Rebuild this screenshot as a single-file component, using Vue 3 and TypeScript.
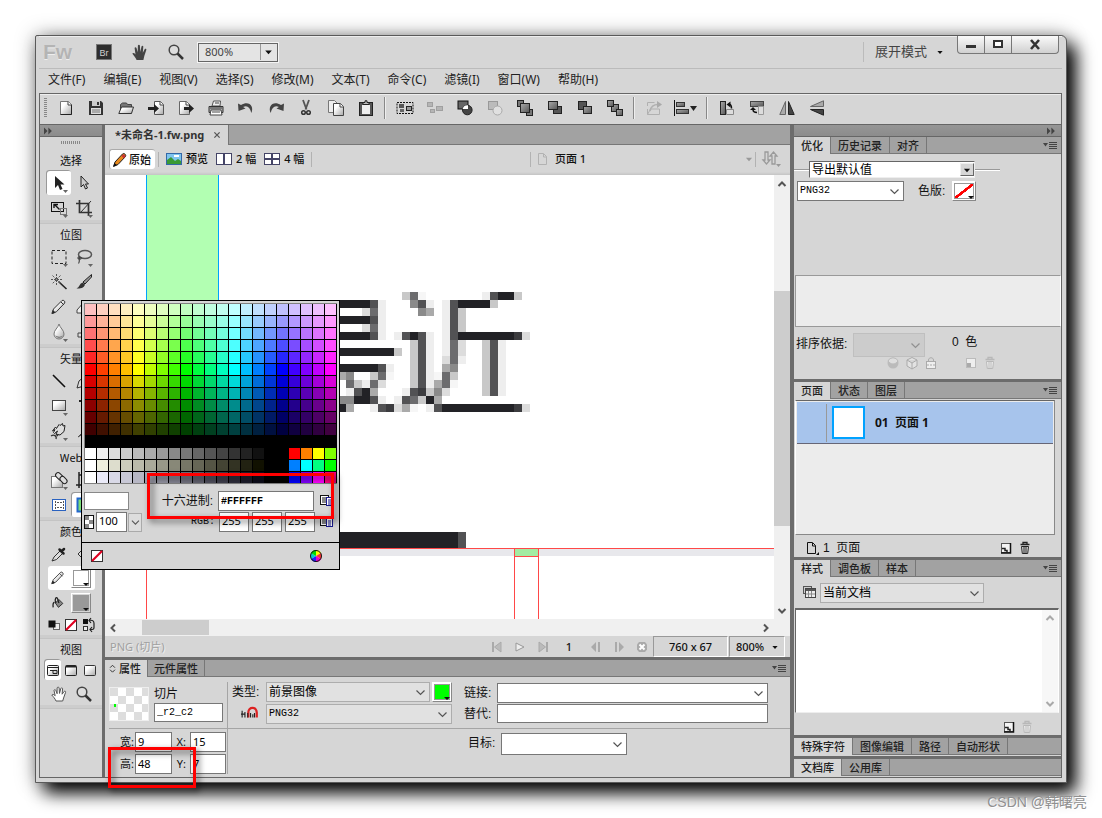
<script setup lang="ts">
import { h, ref } from 'vue'

const icons: Record<string, string> = {
  bridge: '<rect x=".5" y=".5" width="15" height="15" fill="#2e2e2e" stroke="#777"/><text x="8" y="11.5" font-size="9" font-family="Liberation Sans, sans-serif" text-anchor="middle" fill="#d0d0d0">Br</text>',
  hand: '<path d="M4.6 16C3.500 13.500 2 12 .3 9.600c.8-1 2-.7 3.200.8L2.600 4c.2-1.100 1.500-1.100 1.900 0l1.200 4.200L5.900 1.600c.3-1.200 1.700-1.200 2 0l.4 6.400 1.200-5.600c.5-1 1.700-.8 1.800.2l-.5 6.200 2-3.700c.8-.8 1.800-.2 1.500.8L12.300 12l-.9 4z" fill="#444"/>',
  zoom: '<circle cx="6" cy="6" r="4.800" fill="#ddd" stroke="#444" stroke-width="1.500"/><path d="M9.500 9.500l5.500 5.500" stroke="#333" stroke-width="2.500"/>',
  file: '<path d="M2.500 1.500h8l3 3v10h-11z" fill="url(#gl)" stroke="#777"/><path d="M13.500 4.500v10h-11" fill="none" stroke="#222"/><path d="M10 1.500v3.500h3.500" fill="#fff" stroke="#444"/>',
  save: '<path d="M1 1h12l2 2v12H1z" fill="#333"/><rect x="4" y="1" width="8" height="5" fill="#ccc"/><rect x="9" y="2" width="2" height="3" fill="#333"/><rect x="3" y="8" width="10" height="6" fill="#ddd"/><path d="M4 10h8M4 12h8" stroke="#777"/>',
  open: '<path d="M2.500 13V4.500l2-1.500h4l1 1.500h4V13z" fill="#777" stroke="#444"/><path d="M.8 13.500L3.500 7h12l-2 6.500z" fill="url(#gl)" stroke="#333"/>',
  import: '<path d="M6.500 1.500h6l3 3v10h-9z" fill="url(#gl)" stroke="#555"/><path d="M12 1.500v3.500h3.500" fill="#fff" stroke="#444"/><path d="M0 7h6V4l5 4.500L6 13v-3H0z" fill="#222"/>',
  export: '<path d="M1.500 1.500h7l3 3v10h-10z" fill="url(#gl)" stroke="#666"/><path d="M8 1.500v3.500h3.500" fill="#fff" stroke="#444"/><path d="M6 7h5V4l5 4.500-5 4.500v-3H6z" fill="#222"/>',
  print: '<path d="M4 6L5.500 1h7L12 6z" fill="#eee" stroke="#555"/><path d="M1 6.500h14v6H1z" fill="#aaa" stroke="#333"/><path d="M3 10h10l1 5H2z" fill="#fff" stroke="#444"/><path d="M4 12h8M2 8h12M7 3h4" stroke="#444"/>',
  undo: '<path d="M0 3.500l.5 7.500 7-2.500-2.400-1.500C9 5 12 7 13.300 13 16.500 6.500 11 0 3 5z" fill="#444"/>',
  redo: '<path d="M16 3.500l-.5 7.500-7-2.500 2.400-1.500C7 5 4 7 2.700 13-.5 6.500 5 0 13 5z" fill="#444"/>',
  cut: '<path d="M5 0l3.500 9.500M11 0L7.500 9.500" stroke="#555" stroke-width="1.800"/><circle cx="5.500" cy="12.500" r="1.800" fill="none" stroke="#333" stroke-width="1.500"/><circle cx="10.500" cy="12.500" r="1.800" fill="none" stroke="#333" stroke-width="1.500"/>',
  copy: '<path d="M.5.5h6l3 3v9h-9z" fill="#eee" stroke="#777"/><path d="M5.500 3.500h7l3 3v9h-10z" fill="url(#gl)" stroke="#444"/><path d="M12 3.500V7h3.500" fill="#fff" stroke="#444"/>',
  paste: '<rect x="1.500" y="2.500" width="13" height="13" fill="#555" stroke="#222"/><rect x="4" y="5" width="8" height="9" fill="#eee"/><path d="M5 4.500V2.500h2V.8h2v1.700h2v2z" fill="#bbb" stroke="#222"/>',
  group: '<rect x="0" y="2.500" width="16" height="11" fill="none" stroke="#111" stroke-dasharray="2 1"/><rect x="2" y="4" width="5" height="4" fill="#555"/><rect x="3" y="9" width="4" height="3" fill="#666"/><rect x="9.500" y="6.500" width="5" height="4" fill="#999" stroke="#222"/>',
  ungroup: '<g fill="#b5b5b5" stroke="#a0a0a0"><rect x=".5" y="2.500" width="5" height="4"/><rect x="3.500" y="9.500" width="4" height="3"/><rect x="9.500" y="6.500" width="6" height="4"/></g>',
  union: '<rect x="1" y="1" width="10" height="8" fill="#666" stroke="#111"/><circle cx="10.300" cy="10" r="4.800" fill="#444" stroke="#222"/><path d="M11 5.200V9H5.600A5 5 0 0 1 11 5.200z" fill="#fff"/>',
  split: '<rect x="1.500" y="1.500" width="9" height="8" fill="#bbb" stroke="#999"/><circle cx="10.500" cy="10.500" r="4.500" fill="#e0e0e0" stroke="#aaa"/>',
  front: '<g fill="#777" stroke="#222"><rect x=".5" y=".5" width="6" height="6"/><rect x="9.500" y="9.500" width="6" height="6"/><rect x="3.500" y="3.500" width="9" height="9" fill="url(#gd)"/></g>',
  forward: '<rect x="6.500" y="6.500" width="8" height="7" fill="#555" stroke="#222"/><rect x="1.500" y="1.500" width="9" height="8" fill="url(#gd)" stroke="#222"/>',
  backward: '<rect x="1.500" y="1.500" width="8" height="8" fill="#555" stroke="#222"/><rect x="6.500" y="6.500" width="8" height="7" fill="url(#gd)" stroke="#222"/>',
  back: '<g fill="url(#gd)" stroke="#222"><rect x="4.500" y="4.500" width="7" height="7"/><rect x=".5" y=".5" width="6" height="6"/><rect x="9.500" y="9.500" width="6" height="6"/></g>',
  convert: '<g fill="none" stroke="#b0b0b0"><path d="M1.500 6V2.500h7M1.500 14.500h12V9h-9zM1.500 9v5.500" /><path d="M4 11c1-5 4-6.500 8-6.500" stroke-width="1.500"/></g><path d="M11 1l5 3.500L11 8z" fill="#aaa"/>',
  align: '<path d="M-3.500 0v16" stroke="#111"/><rect x="-1.500" y="2.500" width="8" height="4" fill="url(#gd)" stroke="#333"/><rect x="-1.500" y="9.500" width="12" height="4" fill="url(#gd)" stroke="#333"/><path d="M12 6h7l-3.500 5z" fill="#222"/>',
  rotr: '<rect x="1.500" y="1.500" width="5" height="13" fill="url(#gd)" stroke="#222"/><path d="M7.500 9.500h7v5h-7z" fill="#ddd" stroke="#888"/><path d="M12.500 8.500c0-3-1-4-2-4" fill="none" stroke="#111" stroke-width="1.500"/><path d="M7.500 4.500l4-3v6z" fill="#111"/>',
  rotl: '<rect x="1.500" y="1.500" width="13" height="5" fill="url(#gd)" stroke="#444"/><path d="M9.500 6.500h5v8h-5z" fill="#ddd" stroke="#999"/><path d="M8 12.500c-3 0-4-1-4-3" fill="none" stroke="#111" stroke-width="1.500"/><path d="M1 10l3-3 3 3z" fill="#111"/>',
  fliph: '<path d="M6.500 1.500v13H.8z" fill="#aaa" stroke="#666"/><path d="M9.500 1.500v13h5.700z" fill="#444" stroke="#222"/>',
  flipv: '<path d="M14.500.8v5.700H1.500z" fill="#aaa" stroke="#666"/><path d="M14.500 15.200V9.500H1.500z" fill="#444" stroke="#222"/>',
  arrow: '<path d="M4 1v12l3-3 2 5 2.500-1-2-4.500h4z" fill="#222"/>',
  subarrow: '<path d="M5 1v11l2.500-2.500 2 4.500 2-1-2-4h3z" fill="#ccc" stroke="#222"/>',
  scale: '<rect x=".5" y="2.500" width="12" height="9" fill="none" stroke="#111"/><rect x="9.500" y="8.500" width="6" height="6" fill="none" stroke="#777"/><path d="M3.500 4.500l5 5M3 8V4.500h4" fill="none" stroke="#111" stroke-width="1.400"/>',
  crop: '<path d="M3.500 0v12.500H16M0 3.500h12.500V16" fill="none" stroke="#333" stroke-width="1.700"/><path d="M5 12L15 1" stroke="#333"/>',
  marquee: '<rect x="1" y="1.500" width="14" height="13" fill="none" stroke="#222" stroke-dasharray="3 2"/>',
  lasso: '<ellipse cx="9" cy="5.500" rx="6.500" ry="4" fill="none" stroke="#555" stroke-width="1.500"/><path d="M3.500 7.500c-3 1-1 3.500 1 2.500s-.5-2.500-1-1c-.6 2 .5 3.500-1 5.500" fill="none" stroke="#444" stroke-width="1.200"/>',
  wand: '<path d="M7.500 7.500l8 7.500" stroke="#222" stroke-width="1.600"/><path d="M5.500 0v11M0 5.500h11M1.500 1.500l8 8M9.500 1.500l-8 8" stroke="#555" stroke-dasharray="2 1"/>',
  brush: '<path d="M15.500.5L7 8l2 2 6.500-7z" fill="#999" stroke="#222"/><path d="M6.500 8.500l2.500 2c-1 4-5 4-8.500 4C4 13 3 10 6.500 8.500z" fill="#333"/>',
  pencil: '<path d="M1 14.500l1.500-4.500L11 1.500c1.500-1 3.500 1 2.700 2.500L5.500 12.700z" fill="url(#gl)" stroke="#333"/><path d="M1 14.500l1-3 2 2zM10 3l3 3" fill="#111" stroke="#333"/>',
  eraser: '<path d="M1 11l7-8h6l-6 8v3H1z" fill="#eee" stroke="#444"/>',
  blur: '<path d="M8 0c1 4 5 6 5 10a5 5 0 0 1-10 0C3 6 7 4 8 0z" fill="url(#gl)" stroke="#777"/><path d="M4 11.500a4.500 4.500 0 0 0 8 0c-2 1.500-5 1.500-8 0z" fill="#777"/>',
  stamp: '<path d="M2 13V9h4V3h5v6h3v4z" fill="#ddd" stroke="#444"/>',
  line: '<path d="M2 2l12 12" stroke="#111" stroke-width="1.600"/>',
  pen: '<path d="M1 15L3 8l6-5 4 4-5 6z" fill="#ddd" stroke="#333"/>',
  rect: '<rect x="1.500" y="2.500" width="13" height="10" fill="url(#gl)" stroke="#444"/>',
  type: '<path d="M3 3h10M8 3v11" stroke="#222" stroke-width="2"/>',
  freeform: '<path d="M1.500 8l3-4 1 1.500L8 1.500l1 1 2.500-2 .5 2.500 2-.5-1 6-4 3.500-4-1 1.500-3-3 2.500-1-1 1.500-3-1.500 1z" fill="#ddd" stroke="#222"/><path d="M0 13c3-2 6 0 5 3M5 11l2 2" fill="none" stroke="#333" stroke-width="1.300"/>',
  knife: '<path d="M2 14L14 2v5z" fill="#bbb" stroke="#555"/>',
  hotspot: '<rect x=".5" y="4.500" width="11" height="11" fill="url(#gl)" stroke="#777"/><g fill="#ddd" stroke="#222"><rect x="6" y="0" width="5" height="9" rx="2.500" transform="rotate(-45 8.500 4.500)"/><rect x="10" y="4" width="5" height="8" rx="2.500" transform="rotate(-45 12.500 8)"/></g>',
  slice: '<path d="M3 0v16M0 13h16M3 3h10v10" stroke="#222" fill="none" stroke-width="1.500"/>',
  hideslice: '<rect x="1.500" y="2.500" width="13" height="11" fill="#fff" stroke="#2a62c0"/><path d="M4.500 4v8M12.500 4v8M6 5.500h6M6 10.500h6" stroke="#555" stroke-dasharray="2 1"/>',
  showslice: '<rect x="1.500" y="1.500" width="13" height="13" fill="#7d7" stroke="#26c" stroke-width="2"/><path d="M6 1v14" stroke="#d22"/>',
  dropper: '<path d="M1 15l2-4 6-6 2.500 2.500-6 6z" fill="#ddd" stroke="#333"/><path d="M8.500 3.500l4 4M10.500 5.500L13 3" fill="none" stroke="#222" stroke-width="2.500" stroke-linecap="round"/>',
  bucket: '<path d="M2 8l6-6 6 6-6 6z" fill="#ddd" stroke="#333"/>',
  fill: '<path d="M5 8l4-4 4.500 4.500-5 4.500z" fill="#888" stroke="#222"/><path d="M5.500 8c-2-5 1-8 2-5l1.500 5M4 7c-2 1-2 3-1.500 6" fill="none" stroke="#222" stroke-width="1.500"/>',
  defcolors: '<rect x="7.500" y="6.500" width="6" height="6" fill="#eee" stroke="#666"/><rect x="2.500" y="3.500" width="7" height="7" fill="#111"/>',
  none: '<rect x="2.500" y="2.500" width="11" height="11" fill="#fff" stroke="#333"/><path d="M3 13L13 3" stroke="#e00020" stroke-width="2.200"/>',
  swap: '<rect x="2" y="2" width="5" height="5" fill="#111"/><rect x="2.500" y="9.500" width="4" height="4" fill="#eee" stroke="#333"/><path d="M8 3.500c4-1 5 1 5 3v4c0 2-1 2-4 2M10 1L8 3.500 10 6M11 10l-2 2.500 2 2.500" fill="none" stroke="#222" stroke-width="1.200"/>',
  view1: '<rect x="2.500" y="3.500" width="11" height="10" rx="1" fill="url(#gl)" stroke="#222"/><path d="M3 5.500h10M5 8.500h3v3h4v-3H8" fill="none" stroke="#222"/>',
  view2: '<rect x="2.500" y="3.500" width="11" height="10" rx="1" fill="url(#gl)" stroke="#222"/><path d="M3 4.500h10" stroke="#222" stroke-width="2"/>',
  view3: '<rect x="2.500" y="3.500" width="11" height="10" rx="1" fill="url(#gl)" stroke="#333"/>',
  pan: '<path d="M5 15C4 12.500 2.500 11 .8 9c.8-1 2-.7 3.400.8L3 4.500c.2-1.100 1.500-1.100 1.900 0l1.200 3.200L6.100 2c.3-1.200 1.700-1.200 2 0l.4 5.400L9.800 2.500c.5-1 1.700-.8 1.800.2l-.5 5.500 2-2.700c.8-.8 1.800-.2 1.500.8L12.600 12l-.9 3z" fill="#fff" stroke="#555"/>',
  crayon: '<path d="M1.500 14.500L3 10l7.500-8c1.500-1.500 4 .8 3 2.500L6 12.500z" fill="#e8891c" stroke="#222"/><path d="M9.500 4l2.500 2.500 1.200-1.700c.8-1.300-1.300-3-2.500-2z" fill="#c33"/><path d="M1.500 14.500l1-3.500 2.500 2z" fill="#111"/>',
  preview: '<rect x=".5" y="2.500" width="15" height="11" fill="#7ec4ee" stroke="#3468a8"/><path d="M1 13V9l4-3 4 4 3-2 3 2v3z" fill="#3a9a35"/><path d="M8 5h5" stroke="#fff" stroke-width="2"/>',
  two: '<rect x=".5" y="2.500" width="15" height="11" fill="#fff" stroke="#446"/><path d="M8 3v11" stroke="#446" stroke-width="2"/>',
  four: '<rect x=".5" y="2.500" width="15" height="11" fill="#fff" stroke="#446"/><path d="M8 3v11M1 8h14" stroke="#446" stroke-width="2"/>',
  page: '<path d="M3.500 2.500h5l3 3v8h-8zM8.500 3v3h3" fill="none" stroke="#b2b2b2"/>',
  transfer: '<g fill="none" stroke="#9a9a9a" stroke-width="1.300"><path d="M3 1h3v8h2l-3.500 4L1 9h2zM10 13h3V5h2l-3.500-4L8 5h2z"/></g><path d="M14 13h5l-2.500 3z" fill="#999"/>',
  first: '<path d="M4 3v10" stroke="#aaa" stroke-width="2"/><path d="M12 3v10L5.500 8z" fill="#bbb" stroke="#aaa"/>',
  play: '<path d="M4 4l8 4-8 4z" fill="#eee" stroke="#999"/>',
  last: '<path d="M12 3v10" stroke="#aaa" stroke-width="2"/><path d="M4 3v10l6.500-5z" fill="#bbb" stroke="#aaa"/>',
  prev: '<path d="M8 3v10L3 8zM10 3h2v10h-2z" fill="#aaa"/>',
  next: '<path d="M8 3v10l5-5zM4 3h2v10H4z" fill="#aaa"/>',
  stop: '<path d="M5 3h6l2 2.500v5L11 13H5l-2-2.500v-5z" fill="#aaa"/><path d="M5.500 5.500l5 5M10.500 5.500l-5 5" stroke="#fff" stroke-width="2"/>',
  sphere: '<circle cx="8" cy="8" r="5.500" fill="#bbb"/><path d="M3 6a5.500 5.500 0 0 1 10 0C10 10 6 10 3 6z" fill="#dedede" stroke="#bbb"/>',
  cube: '<path d="M8 2.500l5 2.500v6l-5 3-5-3V5zM3 5l5 3 5-3M8 8v6" fill="#e2e2e2" stroke="#aaa"/>',
  lock: '<path d="M5.500 7V5c0-3 5-3 5 0v2" fill="none" stroke="#aaa"/><rect x="3.500" y="6.500" width="9" height="7" fill="#eee" stroke="#aaa"/><path d="M4 10h8" stroke="#aaa" stroke-dasharray="2 1"/>',
  newd: '<rect x="3.500" y="3.500" width="9" height="9" fill="#eee" stroke="#bbb"/><path d="M4 8h4v4H4z" fill="#aaa"/>',
  new: '<rect x="3.500" y="3.500" width="9" height="9" fill="#f4f4f4" stroke="#555"/><path d="M12.500 3v10H3" fill="none" stroke="#111" stroke-width="1.500"/><path d="M4 8.500h3v2h2v2" fill="none" stroke="#222" stroke-width="1.500"/>',
  bin: '<path d="M3.500 4.500h9M6 4V2.500h4V4" fill="none" stroke="#222" stroke-width="1.300"/><path d="M4.500 6.500h7l-.8 7H5.300zM7 7v6M9 7v6" fill="#ddd" stroke="#222"/>',
  bind: '<path d="M3.500 4.500h9M6 4V2.500h4V4" fill="none" stroke="#b8b8b8" stroke-width="1.300"/><path d="M4.500 6.500h7l-.8 7H5.300zM7 7v6M9 7v6" fill="#eee" stroke="#b8b8b8"/>',
  pagecount: '<path d="M3.500 2.500h5l3 3v8h-8zM8.500 3v3h3" fill="none" stroke="#111"/><path d="M15 12v3h-3z" fill="#111"/>',
  styles: '<rect x="1.500" y="1.500" width="8" height="7" fill="#ccc" stroke="#555"/><rect x="3.500" y="3.500" width="10" height="9" fill="#eee" stroke="#444"/><path d="M4 5h9" stroke="#555" stroke-width="2"/><path d="M6.500 6v6M9.500 6v6M4 9h9" stroke="#888"/>',
  bend: '<path d="M6.500 12V7.500C6.500 2 14 2 14 7.500V12" fill="none" stroke="#d22" stroke-width="2"/><path d="M1 6v6M0 9h3M3.500 7v5M6 8v4M8.500 8v4M10.500 9v3M12 8v4" stroke="#222"/>',
  swatches: '<rect x="2.500" y="2.500" width="8" height="9" fill="#fff" stroke="#111"/><path d="M4 5h5M4 7h4M4 9h4" stroke="#111"/><rect x="8.500" y="4.500" width="6" height="8" fill="#fff" stroke="#1a1a90"/><path d="M10 7h3M10 9h3M10 11h3" stroke="#1a1a90"/>',
  checker: '<rect x="3.500" y="1.500" width="9" height="13" fill="#fff" stroke="#111"/><path d="M4 2h4v4H4zM8 6h4v4H8zM4 10h4v4H4z" fill="#888"/>',
  wheel: '<path d="M8 8V2a6 6 0 0 1 5.200 3z" fill="#ff0"/><path d="M8 8l5.200-3v6z" fill="#f33"/><path d="M8 8l5.200 3A6 6 0 0 1 8 14z" fill="#e0c"/><path d="M8 8v6a6 6 0 0 1-5.200-3z" fill="#22f"/><path d="M8 8l-5.200 3V5z" fill="#0cc"/><path d="M8 8L2.800 5A6 6 0 0 1 8 2z" fill="#0d0"/><circle cx="8" cy="8" r="5.500" fill="none" stroke="#111"/>',
  chev: '<path d="M4.500 6.500l4 4 4-4" fill="none" stroke="#555" stroke-width="1.200"/>',
  tri: '<path d="M4.500 6.500h7L8 10.500z" fill="#111"/>',
  up: '<path d="M4.500 10L8 6.500l3.500 3.500" fill="none" stroke="#555" stroke-width="2"/>',
  down: '<path d="M4.500 6L8 9.500 11.500 6" fill="none" stroke="#555" stroke-width="2"/>',
  left: '<path d="M10 4.500L6.500 8l3.500 3.500" fill="none" stroke="#555" stroke-width="2"/>',
  right: '<path d="M6 4.500L9.500 8 6 11.500" fill="none" stroke="#555" stroke-width="2"/>',
  menu: '<path d="M1 6h5L3.500 9.500z" fill="#444"/><path d="M7 5.500h8M7 7.500h8M7 9.500h8M7 11.500h8" stroke="#444"/>',
  ff: '<path d="M0 4v8l4-4zM5 4v8l4-4z" fill="#444"/>',
  min: '<rect x="3" y="8" width="10" height="3" fill="#333"/>',
  max: '<rect x="4" y="4" width="8" height="6" fill="#fff" stroke="#333" stroke-width="2"/>',
  close: '<path d="M4 3l8 9M12 3l-8 9" stroke="#333" stroke-width="2.600"/>',
  tabx: '<path d="M5 5l6 6M11 5l-6 6" stroke="#555" stroke-width="1.500"/>',
  updown: '<path d="M5 7l3-3 3 3M5 9.500l3 3 3-3" fill="none" stroke="#333" stroke-width="1.200"/>',
}

const Ic = (p: { n: string; s?: number; m?: boolean }) =>
  h('svg', {
    viewBox: '0 0 16 16',
    width: p.s ?? 16,
    height: p.s ?? 16,
    class: 'ic',
    'aria-hidden': 'true',
    innerHTML: icons[p.n] + (p.m ? '<path d="M12 15h5l-2.500 3z" fill="#666"/>' : ''),
  })
Ic.props = { n: String, s: Number, m: Boolean }

const menus = ['文件(F)', '编辑(E)', '视图(V)', '选择(S)', '修改(M)', '文本(T)', '命令(C)', '滤镜(I)', '窗口(W)', '帮助(H)']

const bar = [
  ['file', 'save', 'open', 'import', 'export', 'print', 'undo', 'redo', 'cut', 'copy', 'paste'],
  ['group', 'ungroup', 'union', 'split', 'front', 'forward', 'backward', 'back'],
  ['convert', 'align'],
  ['rotr', 'rotl', 'fliph', 'flipv'],
]

type Tool = { n: string; m?: boolean; on?: boolean }
const toolSections: { title: string; tools: Tool[] }[] = [
  { title: '选择', tools: [{ n: 'arrow', m: true, on: true }, { n: 'subarrow' }, { n: 'scale', m: true }, { n: 'crop', m: true }] },
  {
    title: '位图',
    tools: [{ n: 'marquee', m: true }, { n: 'lasso', m: true }, { n: 'wand' }, { n: 'brush' }, { n: 'pencil' }, { n: 'eraser' }, { n: 'blur', m: true }, { n: 'stamp' }],
  },
  { title: '矢量', tools: [{ n: 'line' }, { n: 'pen' }, { n: 'rect', m: true }, { n: 'type' }, { n: 'freeform', m: true }, { n: 'knife' }] },
  { title: 'Web', tools: [{ n: 'hotspot', m: true }, { n: 'slice' }, { n: 'hideslice' }, { n: 'showslice', on: true }] },
]

// Pixels of the open bitmap at 800 %: one digit per pixel, 0 is paper, A is full ink.
const shades: Record<string, string> = {
  '1': '#f6f6f6', '2': '#eeeeee', '3': '#dcdcdc', '4': '#c8c8c8', '5': '#aaaaaa',
  '6': '#8a8a8a', '7': '#6c6c6e', '8': '#525254', '9': '#3c3c3f', A: '#222226',
}
const bitmap = [
  '00000000471000000028AA40',
  'AAAA82000682028AAAA40000',
  '000372000065028400000000',
  'AAAA82000000028400000000',
  '000372000000028400000000',
  'AAAA82028A82028AAAAAAA93',
  '000000000482027300482000',
  'AAAAAAA40482027300482000',
  '000000000482037200482000',
  'AAAAA8200482056000482000',
  '560047100482174000482000',
  '074273000482571000482000',
  '028A50002894630000482000',
  '66AA8202874A500000000000',
  'A500289351028AAAAAAAAA93',
]
const pixels = bitmap.flatMap((row, y) =>
  [...row].map((c, x) => ({ x: 233 + x * 8, y: 117 + y * 8, c: shades[c] })).filter((p) => p.c),
)

const hex = (r: number, g: number, b: number) => `rgb(${Math.round(r)},${Math.round(g)},${Math.round(b)})`
const hues: number[][] = Array.from({ length: 21 }, (_, i) => {
  const seg = Math.floor(i / 4)
  const f = (i % 4) / 4
  return [[1, f, 0], [1 - f, 1, 0], [0, 1, f], [0, 1 - f, 1], [f, 0, 1], [1, 0, 1]][seg]
})
const ranges = [[192, 255], [153, 255], [115, 255], [77, 255], [38, 255], [0, 255], [0, 217], [0, 179], [0, 140], [0, 102], [0, 64]]
const tail = [
  ['#f00', '#ff8000', '#ff0', '#80ff00'],
  ['#0080ff', '#0ff', '#00ff80', '#0f0'],
  ['#00f', '#8000ff', '#f0f', '#ff0080'],
]
const swatches = [
  ...ranges.flatMap(([lo, hi]) => hues.map(([r, g, b]) => hex(lo + (hi - lo) * r, lo + (hi - lo) * g, lo + (hi - lo) * b))),
  ...Array.from({ length: 21 }, () => '#000'),
  ...tail.flatMap((t, k) => [
    ...Array.from({ length: 17 }, (_, i) => {
      const v = Math.max(0, 255 - 17 * i)
      if (i === 0) return '#fff'
      if (v === 0) return '#000'
      return k === 0 ? hex(v, v, v) : k === 1 ? hex(v, v, v - 16) : hex(v - 4, v - 4, v + 10)
    }),
    ...t,
  ]),
]

const hexValue = ref('#FFFFFF')
const alpha = ref('100')
const rgb = ref(['255', '255', '255'])
const sliceName = ref('_r2_c2')
const box = ref({ w: '9', h: '48', x: '15', y: '7' })
</script>

<template>
  <div class="page">
    <svg class="defs" width="0" height="0" aria-hidden="true">
      <defs>
        <linearGradient id="gl" x1="0" y1="0" x2="1" y2="1"><stop offset=".3" stop-color="#fff" /><stop offset="1" stop-color="#a8a8a8" /></linearGradient>
        <linearGradient id="gd" x1="0" y1="0" x2="1" y2="1"><stop offset="0" stop-color="#aaa" /><stop offset="1" stop-color="#555" /></linearGradient>
      </defs>
    </svg>
    <div class="window">
      <header class="title">
        <span class="logo">Fw</span>
        <button class="tb" aria-label="Bridge"><Ic n="bridge" /></button>
        <button class="tb" aria-label="手形"><Ic n="hand" /></button>
        <button class="tb" aria-label="缩放"><Ic n="zoom" /></button>
        <span class="sel zoomsel"><select aria-label="缩放比例"><option>800%</option></select><Ic n="tri" /></span>
        <span class="grow"></span>
        <button class="mode">展开模式<Ic n="tri" :s="12" /></button>
        <div class="winbtns">
          <button aria-label="最小化"><Ic n="min" /></button>
          <button aria-label="最大化"><Ic n="max" /></button>
          <button class="x" aria-label="关闭"><Ic n="close" /></button>
        </div>
      </header>
      <nav class="menu"><button v-for="m in menus" :key="m">{{ m }}</button></nav>

      <div class="frame">
        <div class="toolbar">
          <span class="grip"></span>
          <template v-for="(g, i) in bar" :key="i">
            <span v-if="i" class="sep"></span>
            <button v-for="n in g" :key="n" :class="{ wide: n === 'align' }" :aria-label="n"><Ic :n="n" /></button>
          </template>
        </div>

        <div class="body">
          <aside class="tools">
            <div class="collapse left"><Ic n="ff" :s="14" /></div>
            <div class="hgrip"></div>
            <section v-for="s in toolSections" :key="s.title">
              <h2>{{ s.title }}</h2>
              <div class="pair"><button v-for="t in s.tools" :key="t.n" :class="{ on: t.on }" :aria-label="t.n"><Ic :n="t.n" :m="t.m" /></button></div>
            </section>
            <section class="colors">
              <h2>颜色</h2>
              <div class="pair"><button aria-label="滴管"><Ic n="dropper" /></button><button aria-label="油漆桶"><Ic n="bucket" /></button></div>
              <div class="colrow on"><Ic n="pencil" :s="14" /><button class="well" aria-label="笔触颜色"><i></i></button></div>
              <div class="colrow"><Ic n="fill" :s="14" /><button class="well grey" aria-label="填充颜色"><i></i></button></div>
              <div class="trio"><button aria-label="默认颜色"><Ic n="defcolors" /></button><button aria-label="无"><Ic n="none" /></button><button aria-label="交换颜色"><Ic n="swap" /></button></div>
            </section>
            <section class="views">
              <h2>视图</h2>
              <div class="trio"><button class="on" aria-label="标准屏幕"><Ic n="view1" /></button><button aria-label="带菜单全屏"><Ic n="view2" /></button><button aria-label="全屏"><Ic n="view3" /></button></div>
              <div class="pair"><button aria-label="平移"><Ic n="pan" /></button><button aria-label="放大镜"><Ic n="zoom" /></button></div>
            </section>
          </aside>

          <main class="center">
            <div class="doctabs"><button class="doctab">*未命名-1.fw.png <Ic n="tabx" :s="14" /></button></div>
            <div class="docbar">
              <button class="on"><Ic n="crayon" />原始</button>
              <span class="sep"></span>
              <button><Ic n="preview" />预览</button>
              <button><Ic n="two" />2 幅</button>
              <button><Ic n="four" />4 幅</button>
              <span class="sep"></span>
              <span class="grow"></span>
              <span class="sep"></span>
              <button class="pagebtn"><Ic n="page" />页面 1</button>
              <span class="dim"><Ic n="tri" :s="14" /></span>
              <span class="sep"></span>
              <button class="transfer" aria-label="传输文件"><Ic n="transfer" /></button>
            </div>
            <div class="canvaswrap">
              <svg class="canvas" role="img" aria-label="最近" shape-rendering="crispEdges">
                <rect x="41" y="0" width="73" height="373" fill="#b2ffb2" />
                <path d="M41.500 0v373M113.500 0v373" stroke="#00a2ff" />
                <rect v-for="(p, i) in pixels" :key="i" :x="p.x" :y="p.y" width="8" height="8" :fill="p.c" />
                <rect x="41" y="357" width="312" height="16" fill="#222226" />
                <rect x="353" y="357" width="8" height="16" fill="#525254" />
                <rect x="41" y="374" width="100%" height="7" fill="#e8e8ec" />
                <rect x="410" y="374" width="23" height="7" fill="#a2eca2" />
                <path d="M41 373.500H2000M41.500 373v900M409.500 373v900M433.500 373v900M409 381.500h25" fill="none" stroke="#ff4848" />
              </svg>
              <div class="vscroll"><Ic n="up" /><i></i><Ic n="down" /></div>
            </div>
            <div class="hscroll"><Ic n="left" /><i></i><Ic n="right" /></div>
            <div class="status">
              <span class="kind">PNG (切片)</span>
              <button aria-label="第一帧"><Ic n="first" /></button>
              <button aria-label="播放"><Ic n="play" /></button>
              <button aria-label="最后一帧"><Ic n="last" /></button>
              <span class="frameno">1</span>
              <button aria-label="上一帧"><Ic n="prev" /></button>
              <button aria-label="下一帧"><Ic n="next" /></button>
              <button aria-label="停止"><Ic n="stop" /></button>
              <span class="dims">760 x 67</span>
              <button class="pct">800%<Ic n="tri" :s="12" /></button>
            </div>

            <section class="props">
              <div class="tabs"><button class="on first"><Ic n="updown" :s="13" />属性</button><button>元件属性</button><Ic n="menu" class="pm" /></div>
              <div class="ptop">
                <div class="pleft">
                  <div class="thumb"><i></i></div>
                  <div class="pname"><label for="slice">切片</label><input id="slice" v-model="sliceName" class="mono" /></div>
                </div>
                <div class="ptype">
                  <label for="kind">类型:</label>
                  <span class="sel grey"><select id="kind"><option>前景图像</option></select><Ic n="chev" /></span>
                  <button class="well green" aria-label="切片颜色"><i></i></button>
                  <span class="bend"><Ic n="bend" :s="18" /></span>
                  <span class="sel grey fmt"><select class="mono" aria-label="导出格式"><option>PNG32</option></select><Ic n="chev" /></span>
                </div>
                <div class="plink">
                  <label for="link">链接:</label><span class="sel"><select id="link"><option></option></select><Ic n="chev" /></span>
                  <label for="alt">替代:</label><input id="alt" />
                </div>
              </div>
              <div class="pbot">
                <div class="pdims">
                  <label for="bw">宽:</label><input id="bw" v-model="box.w" /><label for="bx">X:</label><input id="bx" v-model="box.x" />
                  <label for="bh">高:</label><input id="bh" v-model="box.h" /><label for="by">Y:</label><input id="by" v-model="box.y" />
                </div>
                <div class="ptarget"><label for="target">目标:</label><span class="sel"><select id="target"><option></option></select><Ic n="chev" /></span></div>
              </div>
            </section>
          </main>

          <aside class="right">
            <div class="collapse"><Ic n="ff" :s="14" /></div>
            <section class="panel opt">
              <div class="tabs"><button class="on">优化</button><button>历史记录</button><button>对齐</button><Ic n="menu" class="pm" /></div>
              <div class="preset"><hr /><span class="sel old"><select aria-label="导出预设"><option>导出默认值</option></select><b><Ic n="tri" :s="14" /></b></span><hr class="r" /></div>
              <div class="optrow"><span class="sel"><select class="mono" aria-label="文件格式"><option>PNG32</option></select><Ic n="chev" /></span><span class="lbl">色版:</span><button class="well nil" aria-label="色版"><i></i></button></div>
              <div class="swatchbox"></div>
              <div class="sort"><label for="sort">排序依据:</label><span class="sel dis"><select id="sort" disabled><option></option></select><Ic n="chev" /></span><span class="count">0&nbsp; 色</span></div>
              <div class="opticons"><Ic n="sphere" /><Ic n="cube" /><Ic n="lock" /><Ic n="newd" class="gap" /><Ic n="bind" /></div>
            </section>
            <section class="panel pages">
              <div class="tabs"><button class="on">页面</button><button>状态</button><button>图层</button><Ic n="menu" class="pm" /></div>
              <ul><li><span class="gut"></span><span class="pthumb"></span>01&nbsp; 页面 1</li></ul>
              <div class="foot"><Ic n="pagecount" />1&nbsp; 页面<span class="grow"></span><button aria-label="新建页面"><Ic n="new" /></button><button aria-label="删除页面"><Ic n="bin" /></button></div>
            </section>
            <section class="panel styles">
              <div class="tabs"><button class="on">样式</button><button>调色板</button><button>样本</button><Ic n="menu" class="pm" /></div>
              <div class="stylerow"><Ic n="styles" /><span class="sel grey"><select aria-label="样式来源"><option>当前文档</option></select><Ic n="chev" /></span></div>
              <div class="stylebox"><div class="vs"><Ic n="up" /><Ic n="down" /></div></div>
              <div class="foot"><span class="grow"></span><button aria-label="新建样式"><Ic n="new" /></button><button aria-label="删除样式"><Ic n="bind" /></button></div>
            </section>
            <section class="panel mini"><div class="tabs"><button class="on">特殊字符</button><button>图像编辑</button><button>路径</button><button>自动形状</button></div></section>
            <section class="panel mini"><div class="tabs"><button class="on">文档库</button><button>公用库</button></div></section>
          </aside>
        </div>
      </div>

      <div class="picker" role="dialog" aria-label="颜色选择器">
        <div class="palette"><button v-for="(c, i) in swatches" :key="i" :style="{ background: c }" :aria-label="c"></button></div>
        <div class="prow">
          <span class="current"></span>
          <label class="hexlabel" for="hex">十六进制:</label>
          <input id="hex" v-model="hexValue" class="mono hex" />
          <button aria-label="复制"><Ic n="swatches" /></button>
        </div>
        <div class="prow second">
          <Ic n="checker" class="chk" />
          <input v-model="alpha" class="alpha" aria-label="透明度" />
          <button class="drop" aria-label="透明度列表"><Ic n="chev" :s="14" /></button>
          <label class="rgblabel" for="r0">RGB:</label>
          <input v-for="(_, i) in rgb" :id="'r' + i" :key="i" v-model="rgb[i]" class="ch" :aria-label="'通道 ' + (i + 1)" />
          <button aria-label="复制 RGB"><Ic n="swatches" /></button>
        </div>
        <div class="pfoot"><button aria-label="透明"><Ic n="none" /></button><button aria-label="色轮"><Ic n="wheel" /></button></div>
      </div>
      <div class="mark hexmark"></div>
      <div class="mark sizemark"></div>
    </div>
    <span class="credit">CSDN @韩曙亮</span>
  </div>
</template>

<style>
body { margin: 0; background: #fff; }
</style>

<style scoped>
* { box-sizing: border-box; }
.page { position: relative; display: flex; min-height: 100vh; padding: 35px; overflow: hidden; font: 12px/16px "Liberation Sans", "Noto Sans CJK SC", sans-serif; color: #111; }
.defs { position: absolute; }
.ic { display: block; flex: none; overflow: visible; }
button { display: flex; align-items: center; justify-content: center; padding: 0; border: 0; background: none; font: inherit; color: inherit; white-space: nowrap; }
input, select { width: 100%; min-width: 0; margin: 0; border: 1px solid #777; border-radius: 0; background: #fff; font: inherit; color: #000; padding: 0 2px; appearance: none; outline: 0; opacity: 1; }
.grow { flex: 1; }
.mono { font-family: "Liberation Mono", monospace; font-size: 10px; }
.sel { display: grid; }
.sel > * { grid-area: 1 / 1; }
.sel > svg { justify-self: end; align-self: center; margin-right: 2px; pointer-events: none; }
.sel.grey select { background: #e1e1e1; border-color: #adadad; }

.window { position: relative; flex: 1; min-width: 0; display: flex; flex-direction: column; border: 1px solid #5a5a5a; border-radius: 2px 6px 0 0; background: #d6d6d6; padding: 0 4px 4px 3px; box-shadow: 9px 10px 18px #000, 0 0 20px rgba(0, 0, 0, .35); }
.title { display: flex; align-items: center; height: 33px; border-bottom: 1px solid #bbb; box-shadow: inset 0 1px #eee; }
.logo { width: 47px; padding-left: 4px; font: bold 21px/24px "Liberation Sans", sans-serif; color: #b4b4b4; text-shadow: 0 1px #eee; }
.tb { width: 36px; height: 24px; }
.zoomsel { width: 80px; height: 19px; margin-left: 4px; outline: 1px solid #f4f4f4; }
.zoomsel select { border-color: #666; background: #e4e4e4; padding-left: 6px; font-family: "Noto Sans", sans-serif; font-size: 11px; color: #444; }
.zoomsel > svg { border-left: 1px solid #999; }
.mode { align-self: center; height: 20px; gap: 7px; margin-right: 11px; padding-left: 11px; border-left: 1px solid #bbb; font-size: 13px; color: #444; }
.winbtns { display: flex; align-self: flex-start; height: 18px; margin-right: 3px; border: 1px solid #777; border-top: 0; border-radius: 0 0 4px 4px; background: linear-gradient(#fafafa, #d0d0d0); }
.winbtns button { width: 27px; border-right: 1px solid #777; }
.winbtns .x { width: 46px; border: 0; }
.menu { display: flex; gap: 18px; height: 24px; padding-left: 9px; color: #222; }
.menu button { height: 21px; font-family: "Noto Sans", "Noto Sans CJK SC", sans-serif; font-size: 12px; }

.frame { flex: 1; display: flex; flex-direction: column; border: 1px solid #666; min-height: 0; }
.toolbar { display: flex; align-items: center; height: 31px; padding-bottom: 2px; border-bottom: 1px solid #666; box-shadow: inset 0 1px #eee; }
.toolbar button { width: 30px; height: 28px; }
.toolbar .wide { width: 34px; }
.toolbar .sep { width: 2px; height: 22px; margin: 0 4px 0 3px; border-left: 1px solid #888; background: #eee; }
.grip { width: 3px; height: 20px; margin: 0 4px; background: repeating-linear-gradient(#888 0 1px, transparent 1px 2px); }
.body { flex: 1; display: flex; min-height: 0; background: #6c6c6c; }

.tools { width: 62px; flex: none; margin-right: 3px; background: #d6d6d6; }
.collapse { display: flex; align-items: center; justify-content: flex-end; height: 12px; padding-right: 2px; background: linear-gradient(#969696, #8c8c8c); border-bottom: 1px solid #666; }
.collapse.left { justify-content: flex-start; padding: 0 0 0 4px; }
.hgrip { height: 3px; width: 19px; margin: 4px 0 6px 21px; background: repeating-linear-gradient(90deg, #888 0 1px, transparent 1px 2px); }
.tools section { padding-bottom: 3px; border-bottom: 1px solid #c4c4c4; box-shadow: inset 0 -3px #cdcdcd; }
.tools h2 { margin: 0; height: 20px; font: 11px/20px "Noto Sans CJK SC", sans-serif; text-align: center; }
.pair { display: grid; grid-template-columns: 25px 25px; padding-left: 6px; }
.pair button { height: 25px; }
.on { background: #fff; border-radius: 3px; }
.pair .on { box-shadow: inset 1px 1px #999; }
.colrow { display: flex; align-items: center; height: 24px; gap: 6px; margin: 0 7px 1px 8px; padding-left: 3px; }
.well { position: relative; width: 20px; height: 20px; padding: 1px; border: 1px solid #aaa; border-color: #fff #888 #888 #fff; background: #fff; }
.well i { width: 100%; height: 100%; border: 1px solid #999; background: #fff; }
.well::after { content: ""; position: absolute; right: 1px; bottom: 1px; border: 3px solid transparent; border-top-color: #111; border-bottom: 0; }
.well.grey { background: #d6d6d6; }
.well.grey i { background: #999; }
.well.green i { background: #0f0; }
.well.nil { width: 24px; }
.well.nil i { background: linear-gradient(to bottom right, #fff 44%, #f00 45% 56%, #fff 57%); }
.trio { display: flex; justify-content: space-between; padding: 0 5px; height: 17px; margin-bottom: 2px; }
.trio button { width: 17px; }
.views .trio { height: 21px; padding: 0 4px; }
.views .pair button { height: 23px; }
.views .trio .on { box-shadow: inset 1px 1px #999; }

.center { flex: 1; min-width: 0; display: flex; flex-direction: column; background: #d6d6d6; margin-right: 4px; }
.doctabs { height: 20px; background: #a2a2a2; border-bottom: 1px solid #777; display: flex; }
.doctab { height: 20px; padding: 0 4px 0 10px; gap: 6px; background: #d6d6d6; border-right: 1px solid #777; font: bold 11px/18px "Noto Sans", "Noto Sans CJK SC", sans-serif; color: #333; }
.docbar { display: flex; align-items: center; height: 30px; padding: 0 4px 2px; font: 500 11px/16px "Noto Sans", "Noto Sans CJK SC", sans-serif; background: linear-gradient(#d6d6d6 90%, #c4c4c4); }
.docbar button { gap: 4px; padding: 0 4px; height: 20px; }
.docbar .on { border: 1px solid #aaa; border-width: 1px 0 0 1px; padding: 0 4px 0 2px; gap: 1px; }
.docbar .sep { width: 1px; height: 15px; margin: 0 3px; background: #b2b2b2; }
.docbar .pagebtn { width: 208px; justify-content: flex-start; padding-left: 1px; }
.docbar .transfer { padding: 0 8px 0 3px; }
.dim { width: 10px; opacity: .3; }
.canvaswrap { flex: 1; min-height: 0; display: flex; background: #fff; }
.canvas { flex: 1; min-width: 0; height: 100%; display: block; }
.vscroll { display: flex; flex-direction: column; width: 16px; background: #f0f0f0; padding: 1px 0 0; }
.vscroll i { flex: 0 0 235px; margin: auto 0 77px; background: #cdcdcd; }
.hscroll { display: flex; align-items: center; height: 17px; background: #f0f0f0; }
.hscroll i { width: 67px; height: 15px; margin: 0 auto 0 21px; background: #cdcdcd; }
.hscroll svg:last-child { margin-right: 16px; }
.status { display: flex; align-items: center; height: 21px; padding-right: 5px; font: 500 11px/16px "Noto Sans", "Noto Sans CJK SC", sans-serif; }
.kind { flex: 1; padding-left: 5px; color: #a0a0a0; text-shadow: 1px 1px #eee; font-weight: 400; }
.status button { width: 23px; }
.frameno { width: 30px; text-align: center; }
.dims { width: 75px; text-align: center; line-height: 19px; border: 1px solid #999; border-color: #999 #fff #fff #999; }
.status .pct { width: 56px; height: 21px; margin-left: 1px; gap: 5px; padding-left: 3px; border: 1px solid #999; border-color: #999 #fff #fff #999; }

.props { height: 120px; border-top: 3px solid #6c6c6c; background: #d6d6d6; }
.tabs { display: flex; align-items: flex-start; height: 17px; background: #a2a2a2; border-bottom: 1px solid #777; }
.tabs button { padding: 0 7px; height: 16px; border-right: 1px solid #777; font: 500 11px/16px "Noto Sans CJK SC", sans-serif; color: #222; }
.tabs .on { height: 17px; padding-bottom: 1px; background: #d6d6d6; border-radius: 0; }
.tabs .first { padding: 0 6px 1px 1px; }
.tabs .first + button { padding: 0 6px; }
.pm { margin: 0 3px 0 auto; }
.ptop { display: flex; height: 52px; margin: 0 0 0 4px; border-bottom: 1px solid #a5a5a5; }
.pleft { flex: none; display: flex; width: 119px; margin-top: 5px; border-right: 1px solid #a5a5a5; }
.thumb { width: 40px; height: 34px; margin: 5px 5px 0 0; padding: 16px 4px; background: repeating-conic-gradient(#fff 0 25%, #ddd 0 50%) 0 0 / 16px 16px; border: 1px solid #eee; }
.thumb i { display: block; width: 2px; height: 3px; background: #0f0; }
.pname { display: flex; flex-direction: column; width: 69px; padding-top: 4px; gap: 1px; }
.pname input { height: 19px; }
.ptype { display: grid; grid-template-columns: 32px 164px 20px; grid-template-rows: 20px 20px; row-gap: 2px; column-gap: 2px; width: 228px; flex: none; padding: 5px 0 0 4px; }
.ptype label { line-height: 20px; }
.fmt { grid-column: 2 / 4; }
.bend { padding-left: 9px; }
.plink { flex: 1; display: grid; grid-template-columns: 33px minmax(0, 271px); grid-template-rows: 20px 19px; row-gap: 1px; padding: 6px 20px 0 8px; }
.plink label { line-height: 20px; }
.pbot { display: flex; height: 45px; padding-left: 4px; }
.pdims { display: grid; grid-template-columns: 26px 37px 18px 36px; grid-template-rows: 20px 20px; row-gap: 2px; width: 119px; flex: none; padding-top: 3px; border-right: 1px solid #a5a5a5; font: 11px/20px "Noto Sans", "Noto Sans CJK SC", sans-serif; }
.pdims label { text-align: right; padding-right: 1px; }
.pdims label:nth-of-type(even) { padding-right: 4px; }
.ptarget { display: grid; grid-template-columns: 33px 126px; height: 20px; margin: 4px 0 0 240px; line-height: 20px; }

.right { width: 267px; flex: none; display: flex; flex-direction: column; gap: 3px; background: #6c6c6c; }
.panel { background: #d6d6d6; }
.right > .collapse { margin-bottom: -3px; padding-right: 0; }
.opt { height: 242px; flex: none; }
.preset { display: flex; align-items: center; padding-top: 7px; }
.preset hr { width: 15px; margin: 0; border: 0; border-top: 1px solid #999; border-bottom: 1px solid #fff; }
.preset .r { width: 25px; }
.old { width: 166px; }
.old select { height: 17px; border: 1px solid #666; border-right-color: #eee; border-bottom-color: #eee; line-height: 14px; }
.old b { justify-self: end; align-self: center; display: flex; align-items: center; width: 14px; height: 13px; margin-right: 1px; background: #d6d6d6; border: 1px solid #777; border-color: #eee #666 #666 #eee; pointer-events: none; }
.old b svg { margin-left: -1px; }
.optrow { display: flex; padding: 3px 0 0 3px; height: 23px; }
.optrow .sel { width: 107px; }
.lbl { margin: 0 6px 0 14px; line-height: 20px; width: 28px; }
.swatchbox { height: 52px; margin: 74px 0 0 1px; background: #ececec; border: 1px solid #999; border-right-color: #fff; }
.sort { display: flex; padding: 6px 0 0 2px; line-height: 22px; }
.sort label { width: 57px; }
.sel.dis { width: 72px; height: 20px; }
.dis select { background: #ccc; border-color: #bfbfbf; }
.dis svg { opacity: .5; }
.count { margin-left: 27px; line-height: 18px; }
.opticons { display: flex; gap: 3px; padding: 0 0 0 91px; }
.opticons .gap { margin-left: 21px; }
.pages { height: 175px; flex: none; }
.pages ul { list-style: none; margin: 1px 6px 0 1px; padding: 1px; height: 135px; background: #ececec; border: 1px solid #888; border-color: #666 #888 #888 #fff; }
.pages li { display: flex; align-items: center; height: 42px; border-bottom: 1px solid #667; background: #a7c4ec; font: bold 12px/16px "Noto Sans", "Noto Sans CJK SC", sans-serif; }
.gut { width: 30px; height: 38px; border-right: 1px solid #999; margin-right: 5px; }
.pthumb { width: 33px; height: 33px; margin-right: 10px; background: #fff; border: 2px solid #00a2ff; }
.foot { display: flex; align-items: center; height: 22px; gap: 3px; padding: 2px 28px 0 10px; }
.pages .foot { padding-top: 4px; }
.styles { flex: 1; display: flex; flex-direction: column; min-height: 150px; }
.stylerow { display: flex; align-items: center; height: 31px; gap: 2px; padding-left: 8px; }
.stylerow .sel { width: 164px; height: 20px; }
.stylebox { flex: 1; display: flex; justify-content: flex-end; margin: 0 2px 0 1px; background: #fff; border: 1px solid #666; border-width: 2px 1px 1px; border-right-color: #fff; border-bottom-color: #eee; }
.vs { display: flex; flex-direction: column; justify-content: space-between; width: 16px; background: #f0f0f0; opacity: .5; }
.styles .foot { padding: 6px 26px 0 0; gap: 2px; }
.mini { flex: none; height: 18px; }

.picker { position: absolute; left: 45px; top: 264px; width: 259px; height: 270px; padding: 2px; border: 1px solid #000; background: #d6d6d6; font-family: "Noto Sans", "Noto Sans CJK SC", sans-serif; }
.palette { display: grid; grid-template-columns: repeat(21, 11px); grid-auto-rows: 11px; gap: 1px; width: 253px; background: #000; border: 1px solid #808080; border-right: 0; }
.prow { display: flex; align-items: center; height: 20px; margin-top: 7px; }
.prow.second { margin-top: 1px; }
.current { width: 45px; height: 18px; background: #fff; border: 1px solid #888; }
.hexlabel { flex: 1; text-align: right; padding-right: 5px; font: 12px/18px "Liberation Sans", "Noto Sans CJK SC", sans-serif; }
.hex { width: 96px; height: 20px; font-weight: bold; margin-right: 4px; }
.prow button { width: 16px; margin-right: 3px; }
.chk { margin-left: -3px; }
.prow .alpha { width: 31px; height: 20px; margin-right: 1px; margin-left: -1px; padding-bottom: 3px; font-size: 11px; }
.prow .drop { width: 14px; height: 19px; margin: 0; border: 1px solid #aaa; background: #ddd; }
.rgblabel { flex: 1; text-align: right; padding-right: 4px; font: 10px/18px "Liberation Mono", monospace; }
.prow .ch { width: 30px; height: 20px; margin-right: 3px; padding-bottom: 3px; font-size: 11px; }
.pfoot { display: flex; justify-content: space-between; align-items: center; margin: 10px -2px 0; padding: 1px 15px 0 7px; height: 25px; border-top: 1px solid #000; }

.mark { position: absolute; border: 3px solid #f00; filter: drop-shadow(3px 3px 3px rgba(0, 0, 0, .6)); pointer-events: none; }
.hexmark { left: 111px; top: 437px; width: 187px; height: 46px; }
.sizemark { left: 72px; bottom: -6px; width: 88px; height: 41px; }
.credit { position: absolute; right: 15px; bottom: 7px; font: 14px/18px "Liberation Sans", "Noto Sans CJK SC", sans-serif; color: #909090; text-shadow: 1px 1px #fff; }
</style>
